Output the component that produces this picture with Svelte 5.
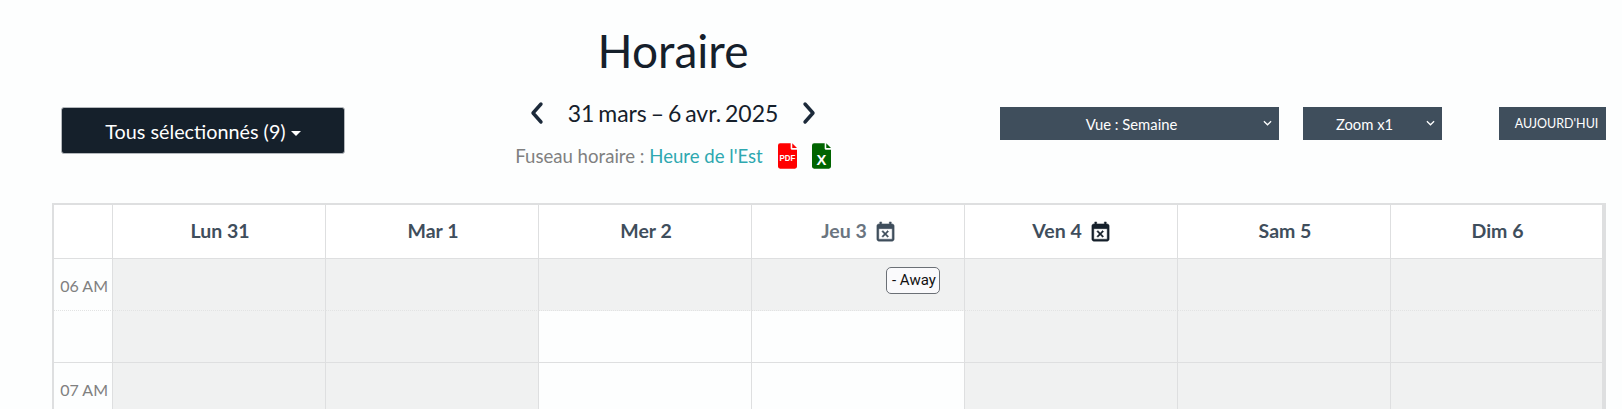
<script>
	const days = [
		{ label: 'Lun 31' },
		{ label: 'Mar 1' },
		{ label: 'Mer 2' },
		{ label: 'Jeu 3', off: true, muted: true },
		{ label: 'Ven 4', off: true },
		{ label: 'Sam 5' },
		{ label: 'Dim 6' }
	];

	// which half-hour cells are closed, per row
	const rows = [
		{ time: '06 AM', closed: [1, 1, 1, 1, 1, 1, 1], half: true },
		{ time: '', closed: [1, 1, 0, 0, 1, 1, 1] },
		{ time: '07 AM', closed: [1, 1, 0, 0, 1, 1, 1], half: true }
	];

	const calendarX =
		'M19 3H18V1H16V3H8V1H6V3H5C3.89 3 3 3.9 3 5V19C3 20.1 3.89 21 5 21H19C20.1 21 21 20.1 21 19V5C21 3.9 20.1 3 19 3M19 19H5V8H19V19M9.31 17L11.75 14.56L14.19 17L15.25 15.94L12.81 13.5L15.25 11.06L14.19 10L11.75 12.44L9.31 10L8.25 11.06L10.69 13.5L8.25 15.94L9.31 17Z';
</script>

<div class="page">
	<div class="toolbar">
		<div class="left">
			<button class="all-btn">Tous sélectionnés (9)<span class="caret"></span></button>
		</div>

		<div class="center">
			<h1>Horaire</h1>
			<div class="range">
				<svg class="arrow" viewBox="0 0 14 24"><path d="M11 3 3 12l8 9" /></svg>
				<span>31 mars – 6 avr. 2025</span>
				<svg class="arrow" viewBox="0 0 14 24"><path d="M3 3l8 9-8 9" /></svg>
			</div>
			<div class="tz">
				<span>Fuseau horaire : <a href="#tz">Heure de l'Est</a></span>
				<svg class="file pdf" viewBox="0 0 18 24">
					<path d="M2 0h10v5a1 1 0 0 0 1 1h5v16a2 2 0 0 1-2 2H2a2 2 0 0 1-2-2V2a2 2 0 0 1 2-2z" />
					<path d="M13.5 0 18 4.5h-4.5z" />
					<text x="9" y="17" text-anchor="middle" textLength="15" lengthAdjust="spacingAndGlyphs">PDF</text>
				</svg>
				<svg class="file xls" viewBox="0 0 18 24">
					<path d="M2 0h10v5a1 1 0 0 0 1 1h5v16a2 2 0 0 1-2 2H2a2 2 0 0 1-2-2V2a2 2 0 0 1 2-2z" />
					<path d="M13.5 0 18 4.5h-4.5z" />
					<text x="9" y="20.5" text-anchor="middle">X</text>
				</svg>
			</div>
		</div>

		<div class="right">
			<div class="select view">
				<select><option>Vue : Semaine</option></select>
				<svg viewBox="0 0 10 6"><path d="M1 1l4 4 4-4" /></svg>
			</div>
			<div class="select zoom">
				<select><option>Zoom x1</option></select>
				<svg viewBox="0 0 10 6"><path d="M1 1l4 4 4-4" /></svg>
			</div>
			<button class="today">AUJOURD'HUI</button>
		</div>
	</div>

	<div class="calendar">
		<div class="corner"></div>
		{#each days as d}
			<div class="head" class:muted={d.muted}>
				{d.label}
				{#if d.off}
					<svg viewBox="0 0 24 24"><path d={calendarX} /></svg>
				{/if}
			</div>
		{/each}

		{#each rows as r, i}
			<div class="time" class:half={r.half}>{r.time}</div>
			{#each r.closed as c, j}
				<div class="cell" class:closed={c} class:half={r.half}>
					{#if i === 0 && j === 3}
						<span class="chip">- Away</span>
					{/if}
				</div>
			{/each}
		{/each}
	</div>
</div>

<style>
	:global(body) {
		background: #fdfefe;
		overflow: hidden;
	}

	.page {
		font-family: Lato, 'Open Sans', sans-serif;
		height: 409px;
		overflow: hidden;
	}

	.toolbar {
		display: grid;
		grid-template-columns: 400px 546px 1fr;
		height: 203px;
		box-sizing: border-box;
		padding-top: 23px;
	}

	.left {
		padding: 84px 0 0 61px;
	}

	.all-btn {
		width: 284px;
		height: 47px;
		background: #15202b;
		border: 1px solid #b4b8bc;
		border-radius: 3px;
		color: #fff;
		font: 400 19.8px Lato, sans-serif;
	}

	.caret {
		display: inline-block;
		margin-left: 5px;
		vertical-align: middle;
		border-top: 5px solid #fff;
		border-left: 5px solid transparent;
		border-right: 5px solid transparent;
	}

	.center {
		display: flex;
		flex-direction: column;
		align-items: center;
	}

	h1 {
		margin: 0;
		font-size: 46px;
		font-weight: 400;
		line-height: 56px;
		color: #15202b;
	}

	.range {
		display: flex;
		align-items: center;
		gap: 24px;
		margin-top: 15px;
		font-size: 23px;
		word-spacing: -2px;
		line-height: 38px;
		color: #15202b;
	}

	.arrow {
		width: 14px;
		height: 24px;
	}

	.arrow path {
		fill: none;
		stroke: #1c2a3a;
		stroke-width: 3.4;
		stroke-linecap: round;
		stroke-linejoin: round;
	}

	.tz {
		display: flex;
		align-items: center;
		margin-top: 11px;
		font-size: 18.6px;
		color: #808080;
	}

	.tz a {
		color: #2ea8b0;
		text-decoration: none;
	}

	.file {
		width: 19px;
		height: 26px;
		margin-left: 15px;
	}

	.pdf {
		fill: #ff0000;
	}

	.xls {
		fill: #006400;
	}

	.file text {
		fill: #fff;
		font-family: 'Liberation Sans', sans-serif;
		font-weight: 700;
	}

	.pdf text {
		font-size: 8px;
	}

	.xls text {
		font-size: 14px;
	}

	.right {
		display: flex;
		align-items: flex-start;
		padding: 84px 0 0 54px;
	}

	.select {
		position: relative;
		height: 33px;
		margin-right: 24px;
	}

	.select.view {
		width: 279px;
	}

	.select.zoom {
		width: 139px;
		margin-right: 57px;
	}

	.select select {
		appearance: none;
		width: 100%;
		height: 100%;
		padding: 1px 16px 0 0;
		border: 0;
		border-radius: 0;
		background: #3f4e5c;
		color: #fff;
		font: 400 14.8px Lato, sans-serif;
		text-align: center;
		text-align-last: center;
	}

	.select svg {
		position: absolute;
		right: 7px;
		top: 13px;
		width: 9px;
		height: 6px;
		fill: none;
		stroke: #fff;
		stroke-width: 1.4;
	}

	.today {
		width: 107px;
		height: 33px;
		padding: 0 0 0 8px;
		border: 0;
		background: #3f4e5c;
		color: #fff;
		font: 400 12.5px Lato, sans-serif;
	}

	.calendar {
		display: grid;
		grid-template-columns: 59px repeat(6, 213px) 212px;
		grid-template-rows: 54px repeat(3, 52px);
		width: 1554px;
		box-sizing: border-box;
		margin-left: 52px;
		border: 2px solid #dedfe0;
		border-width: 2px 3px 0 2px;
	}

	.corner,
	.head {
		background: #fff;
		border-right: 1px solid #dedfe0;
		border-bottom: 1px solid #dedfe0;
	}

	.head {
		display: flex;
		align-items: center;
		justify-content: center;
		gap: 7px;
		box-sizing: border-box;
		padding: 0 0 3px 2px;
		font-size: 19.5px;
		font-weight: 700;
		color: #3f4e5c;
	}

	.head svg {
		width: 23px;
		height: 23px;
		margin-top: 5px;
		fill: #15202b;
		stroke: #15202b;
		stroke-width: 0.5;
	}

	.head.muted {
		color: #6b7580;
	}

	.head.muted svg {
		fill: #3f4e5c;
		stroke: #3f4e5c;
	}

	.time {
		box-sizing: border-box;
		padding: 17px 4px 0 0;
		text-align: right;
		font-size: 16px;
		color: #808080;
		border-right: 1px solid #dedfe0;
		border-bottom: 1px solid #dedfe0;
	}

	.cell {
		position: relative;
		border-right: 1px solid #dedfe0;
		border-bottom: 1px solid #dedfe0;
	}

	.time.half,
	.cell.half {
		border-bottom: 1px dotted #e2e3e3;
	}

	.cell.closed {
		background: #f0f1f1;
	}

	.chip {
		position: absolute;
		left: 134px;
		top: 8px;
		box-sizing: border-box;
		width: 54px;
		height: 27px;
		padding-left: 5px;
		border: 1px solid #6b7076;
		border-radius: 5px;
		background: #fafafc;
		color: #111;
		font: 400 15px/25px Roboto, sans-serif;
	}
</style>
